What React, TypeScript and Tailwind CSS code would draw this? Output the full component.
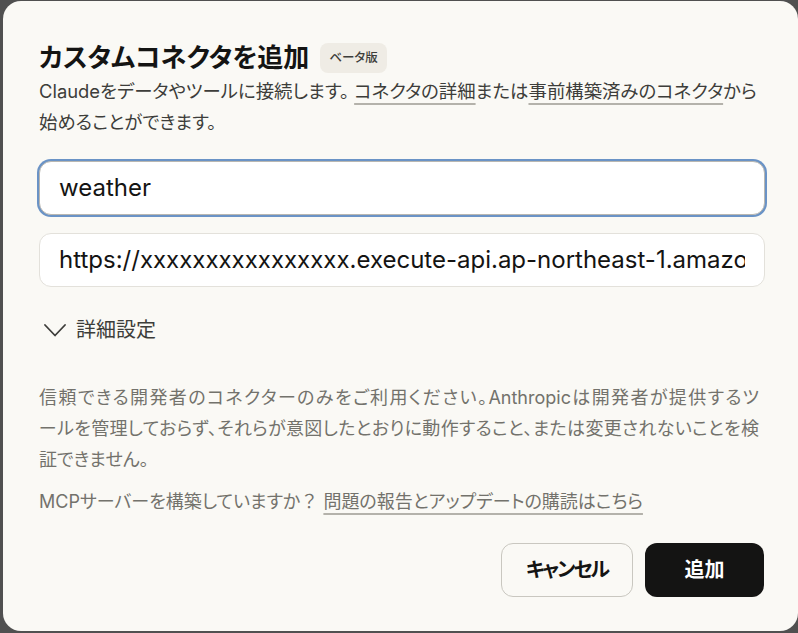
import React from 'react';

const FONT = {
  fontFamily: 'Inter, "Noto Sans CJK JP", sans-serif',
  fontFeatureSettings: '"palt"',
};

function Link({ children }: { children: React.ReactNode }) {
  return (
    <span className="underline decoration-[#b4b2ab] decoration-[1.5px] underline-offset-[5px]">
      {children}
    </span>
  );
}

function AddConnectorDialog() {
  return (
    <div className="w-[795px] h-[630px] bg-[#faf9f5] rounded-[18px] pl-[36px] pr-[33px] pt-[42px]">
      {/* header */}
      <div className="flex items-center gap-[11px] h-[30px]">
        <h1 className="text-[26px] font-bold text-[#141413] leading-none">
          カスタムコネクタを追加
        </h1>
        <span className="h-[30px] px-[9px] flex items-center rounded-[8px] bg-[#efece5] text-[12.5px] font-medium text-[#3d3d3a]">
          ベータ版
        </span>
      </div>
      <p className="mt-[3px] text-[18.4px] leading-[31px] text-[#3d3d3a] whitespace-nowrap">
        Claudeをデータやツールに接続します。 <Link>コネクタの詳細</Link>または
        <Link>事前構築済みのコネクタ</Link>から
        <br />
        始めることができます。
      </p>

      {/* inputs */}
      <div className="mt-[23px] flex flex-col gap-[18px]">
        <div className="h-[54px] rounded-[12px] bg-white border border-[#b9b7b1] ring-2 ring-[#6a93c6] flex items-center px-[19px]">
          <span className="flex-1 overflow-hidden text-[24px] text-[#141413] whitespace-nowrap">weather</span>
        </div>
        <div className="h-[54px] rounded-[12px] bg-white border border-[#e3e1db] flex items-center px-[19px]">
          <span className="flex-1 overflow-hidden text-[24px] text-[#141413] whitespace-nowrap">
            https://xxxxxxxxxxxxxxxx.execute-api.ap-northeast-1.amazonaws.com/prod/mcp
          </span>
        </div>
      </div>

      {/* advanced */}
      <div className="mt-[31px] flex items-center gap-[10px] pl-[5px] h-[24px]">
        <svg width="22" height="13" viewBox="0 0 22 13" fill="none">
          <polyline points="1,1 11,11.5 21,1" stroke="#3d3d3a" strokeWidth="1.8" strokeLinecap="round" strokeLinejoin="round" />
        </svg>
        <span className="text-[20px] text-[#3d3d3a]">詳細設定</span>
      </div>

      <div className="mt-[40px] text-[18px] leading-[31px] text-[#73726c]">
        <span className="block w-[720px] [text-align-last:justify]">
          信頼できる開発者のコネクターのみをご利用ください。Anthropicは開発者が提供するツ
        </span>
        <span className="block w-[720px] [text-align-last:justify]">
          ールを管理しておらず、それらが意図したとおりに動作すること、または変更されないことを検
        </span>
        <span className="block">証できません。</span>
      </div>
      <p className="mt-[11px] text-[18px] leading-[31px] text-[#73726c] whitespace-nowrap">
        MCPサーバーを構築していますか<span className="[font-feature-settings:normal]">？</span>{' '}
        <Link>問題の報告とアップデートの購読はこちら</Link>
      </p>

      {/* actions */}
      <div className="mt-[26px] flex justify-end gap-[12px] pr-[1px]">
        <button className="w-[132px] h-[54px] rounded-[12px] border border-[#c9c7c0] bg-transparent text-[20px] font-bold tracking-[-2px] text-[#141413]">
          キャンセル
        </button>
        <button className="w-[119px] h-[54px] rounded-[12px] bg-[#141413] text-[20px] font-bold text-white">
          追加
        </button>
      </div>
    </div>
  );
}

export default function App() {
  return (
    <div className="h-[633px] overflow-hidden bg-[#505050] pl-[3px] pt-[1px]" style={FONT}>
      <AddConnectorDialog />
    </div>
  );
}
